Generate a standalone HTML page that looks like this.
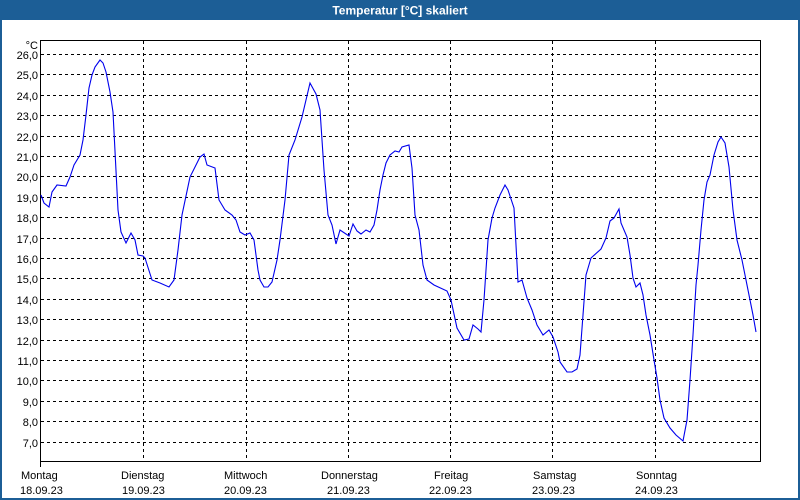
<!DOCTYPE html>
<html><head><meta charset="utf-8"><style>
html,body{margin:0;padding:0;width:800px;height:500px;overflow:hidden;background:#fff;font-family:"Liberation Sans",sans-serif}
</style></head><body>
<svg width="800" height="500" xmlns="http://www.w3.org/2000/svg" style="display:block">
<rect x="0" y="0" width="800" height="500" fill="#1c5e96"/>
<rect x="2" y="20" width="796" height="478" fill="#fff"/>
<text x="400" y="14.5" text-anchor="middle" font-family="Liberation Sans, sans-serif" font-size="12" font-weight="bold" fill="#fff">Temperatur [°C] skaliert</text>
<g stroke="#000" stroke-width="1" stroke-dasharray="3,3" fill="none" shape-rendering="crispEdges">
<path d="M41 54.5H758M41 74.5H758M41 95.5H758M41 115.5H758M41 136.5H758M41 156.5H758M41 176.5H758M41 197.5H758M41 217.5H758M41 238.5H758M41 258.5H758M41 278.5H758M41 299.5H758M41 319.5H758M41 340.5H758M41 360.5H758M41 380.5H758M41 401.5H758M41 421.5H758M41 442.5H758"/>
<path d="M143.5 41V461M246.5 41V461M348.5 41V461M450.5 41V461M552.5 41V461M655.5 41V461"/>
</g>
<g stroke="#000" stroke-width="1" fill="none" shape-rendering="crispEdges">
<rect x="40.5" y="40.5" width="720" height="421"/>
<path d="M40.5 461V467"/>
</g>
<g font-family="Liberation Sans, sans-serif" font-size="11" fill="#000" text-anchor="end">
<text x="38" y="49">°C</text>
<text x="38" y="59">26,0</text><text x="38" y="79">25,0</text><text x="38" y="100">24,0</text><text x="38" y="120">23,0</text><text x="38" y="141">22,0</text><text x="38" y="161">21,0</text><text x="38" y="181">20,0</text><text x="38" y="202">19,0</text><text x="38" y="222">18,0</text><text x="38" y="243">17,0</text><text x="38" y="263">16,0</text><text x="38" y="283">15,0</text><text x="38" y="304">14,0</text><text x="38" y="324">13,0</text><text x="38" y="345">12,0</text><text x="38" y="365">11,0</text><text x="38" y="385">10,0</text><text x="38" y="406">9,0</text><text x="38" y="426">8,0</text><text x="38" y="447">7,0</text>
</g>
<g font-family="Liberation Sans, sans-serif" font-size="11" fill="#000">
<text x="21" y="479">Montag</text><text x="20" y="494">18.09.23</text>
<text x="121" y="479">Dienstag</text><text x="122" y="494">19.09.23</text>
<text x="224" y="479">Mittwoch</text><text x="224" y="494">20.09.23</text>
<text x="321" y="479">Donnerstag</text><text x="327" y="494">21.09.23</text>
<text x="434" y="479">Freitag</text><text x="429" y="494">22.09.23</text>
<text x="533" y="479">Samstag</text><text x="532" y="494">23.09.23</text>
<text x="636" y="479">Sonntag</text><text x="635" y="494">24.09.23</text>
</g>
<polyline fill="none" stroke="#0000ee" stroke-width="1.1" points="41,195 44,203 49,207 52,192 57,185 66,186 70,177 74,165 80,155 83,140 86,115 89,88 92,75 95,67 100,60 103,63 106,72 110,92 113,112 118,210 121,232 126,243 131,233 135,240 138,255 143,256 145,258 152,280 160,283 169,287 174,280 178,250 182,215 190,177 200,157 204,154 207,165 215,168 219,200 225,210 232,215 236,220 240,232 245,235 250,233 254,240 258,270 260,280 264,287 268,287 272,282 277,260 280,240 285,200 289,155 295,140 302,117 310,83 316,94 320,110 324,170 328,215 332,225 336,244 340,230 349,236 353,224 357,231 361,234 366,230 370,232 374,225 377,210 380,190 383,175 386,163 390,155 395,151 399,152 402,147 409,145 412,168 415,215 419,230 423,265 427,280 434,285 447,291 451,300 457,328 464,340 469,339 473,325 478,329 481,332 484,300 488,240 492,218 495,208 500,195 505,185 508,190 514,208 518,282 522,280 527,298 532,310 537,325 543,335 549,330 553,337 558,352 560,362 567,372 572,372 577,369 580,355 586,275 591,258 601,249 606,238 610,221 614,218 619,209 621,223 627,237 630,255 633,278 636,287 640,283 643,295 646,315 650,335 654,360 657,378 660,400 664,418 670,428 676,435 683,441 687,420 690,380 693,335 696,285 698,265 701,230 704,200 707,182 710,175 714,155 718,142 721,137 725,143 729,167 733,210 737,240 742,260 746,280 750,300 753,315 756,332"/>
</svg>
</body></html>
